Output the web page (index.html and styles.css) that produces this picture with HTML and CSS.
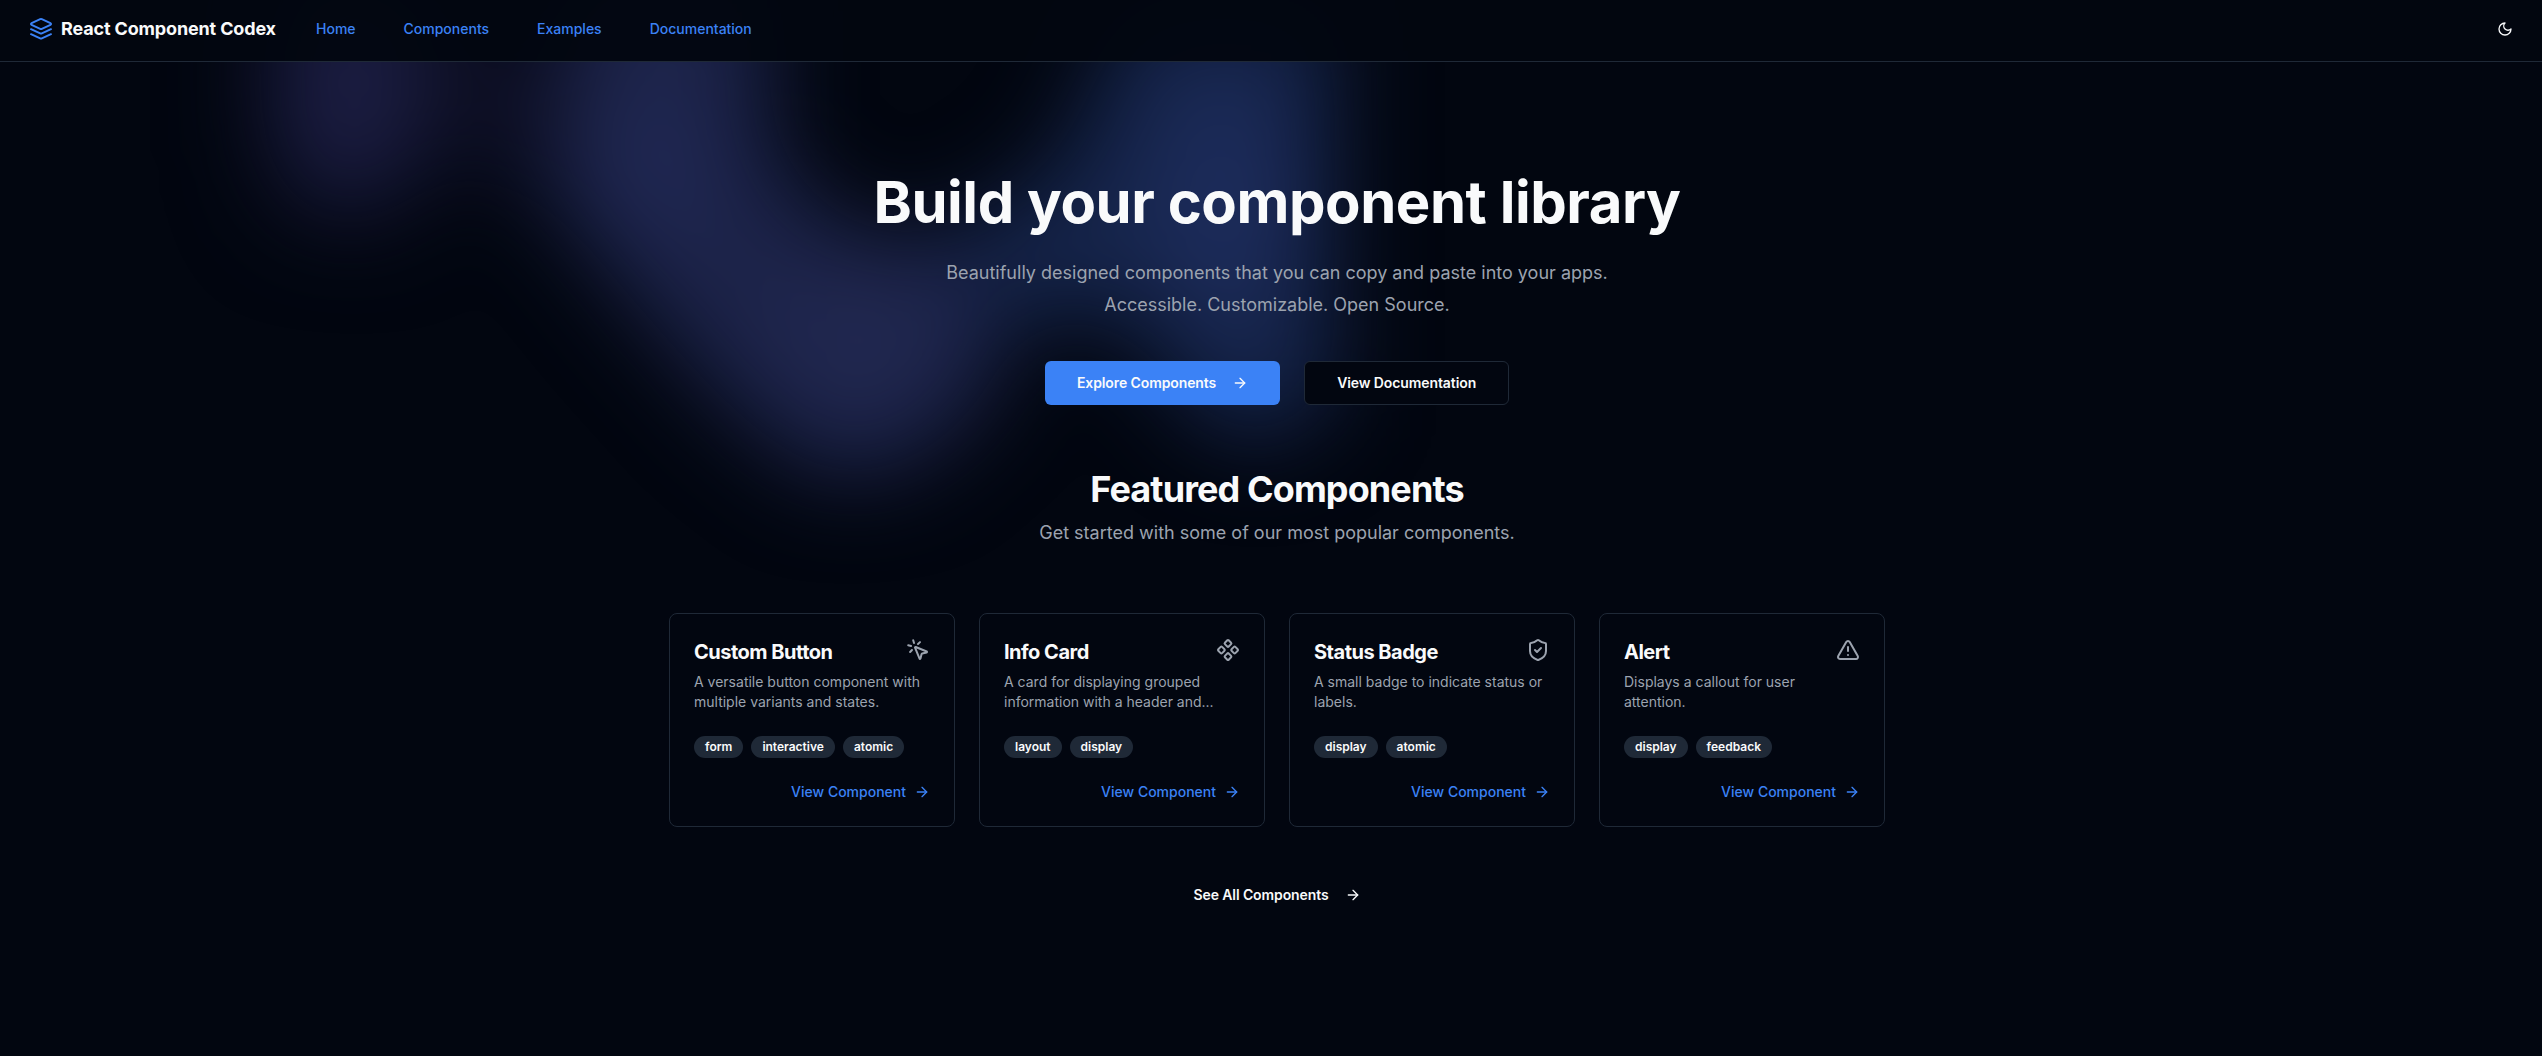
FILE: index.html
```html
<!DOCTYPE html>
<html lang="en">
<head>
<meta charset="utf-8">
<title>React Component Codex</title>
<link rel="stylesheet" href="styles.css">
</head>
<body>
<svg width="0" height="0" class="sprite" aria-hidden="true">
  <symbol id="arrow" viewBox="0 0 24 24"><path d="M5 12h14"/><path d="m12 5 7 7-7 7"/></symbol>
</svg>
<svg class="aurora" viewBox="0 0 2542 1056" aria-hidden="true">
  <defs>
    <filter id="soft" x="-50%" y="-50%" width="200%" height="200%" color-interpolation-filters="sRGB"><feGaussianBlur stdDeviation="46"/></filter>
  </defs>
  <g filter="url(#soft)">
    <path d="M260 -60H430L600 100V220L440 160L390 230L290 220L260 150Z" fill="#0c0e22"/>
    <ellipse cx="350" cy="85" rx="75" ry="115" fill="#1b1d42"/>
    <path d="M570 -40H770V150L850 235L1000 235V390L910 470L820 480L730 410L640 310L550 200Z" fill="#1c2349"/>
    <ellipse cx="655" cy="165" rx="60" ry="80" fill="#1f2752"/>
    <ellipse cx="860" cy="330" rx="85" ry="90" fill="#20274f"/>
    <path d="M1130 0H1335V400L1260 450L1190 410L1130 320L960 320V230L1060 160Z" fill="#15244a"/>
    <ellipse cx="1225" cy="200" rx="75" ry="120" fill="#1c2b5a"/>
  </g>
</svg>
<header class="topbar">
  <a class="brand">
    <svg class="icon brand-icon" viewBox="0 0 24 24"><path d="m12.83 2.18a2 2 0 0 0-1.66 0L2.6 6.08a1 1 0 0 0 0 1.83l8.58 3.91a2 2 0 0 0 1.66 0l8.58-3.9a1 1 0 0 0 0-1.83Z"/><path d="m22 12.18-9.17 4.16a2 2 0 0 1-1.66 0L2 12.18"/><path d="m22 17.18-9.17 4.16a2 2 0 0 1-1.66 0L2 17.18"/></svg>
    <span class="brand-name">React Component Codex</span>
  </a>
  <nav class="nav"><a>Home</a><a>Components</a><a>Examples</a><a>Documentation</a></nav>
  <button class="theme" aria-label="Toggle theme"><svg class="icon icon-sm" viewBox="0 0 24 24"><path d="M12 3a6 6 0 0 0 9 9 9 9 0 1 1-9-9Z"/></svg></button>
</header>
<main class="main">
  <section class="hero">
    <h1>Build your component library</h1>
    <p class="lead">Beautifully designed components that you can copy and paste into your apps.<br>Accessible. Customizable. Open Source.</p>
    <div class="actions">
      <a class="btn btn-primary">Explore Components<svg class="icon icon-sm"><use href="#arrow"/></svg></a>
      <a class="btn btn-outline">View Documentation</a>
    </div>
  </section>
  <section class="featured">
    <h2>Featured Components</h2>
    <p class="sub">Get started with some of our most popular components.</p>
    <div class="cards">
      <article class="card">
        <div class="card-head"><h3>Custom Button</h3><svg class="icon" viewBox="0 0 24 24"><path d="M14 4.1 12 6"/><path d="m5.1 8-2.9-.8"/><path d="m6 12-1.9 2"/><path d="M7.2 2.2 8 5.1"/><path d="M9.037 9.69a.498.498 0 0 1 .653-.653l11 4.5a.5.5 0 0 1-.074.949l-4.349 1.041a1 1 0 0 0-.74.739l-1.04 4.35a.5.5 0 0 1-.95.074z"/></svg></div>
        <p class="desc">A versatile button component with multiple variants and states.</p>
        <div class="tags"><span>form</span><span>interactive</span><span>atomic</span></div>
        <a class="more">View Component<svg class="icon icon-sm"><use href="#arrow"/></svg></a>
      </article>
      <article class="card">
        <div class="card-head"><h3>Info Card</h3><svg class="icon" viewBox="0 0 24 24"><path d="M15.536 11.293a1 1 0 0 0 0 1.414l2.376 2.377a1 1 0 0 0 1.414 0l2.377-2.377a1 1 0 0 0 0-1.414l-2.377-2.377a1 1 0 0 0-1.414 0z"/><path d="M2.297 11.293a1 1 0 0 0 0 1.414l2.377 2.377a1 1 0 0 0 1.414 0l2.377-2.377a1 1 0 0 0 0-1.414L6.088 8.916a1 1 0 0 0-1.414 0z"/><path d="M8.916 17.912a1 1 0 0 0 0 1.415l2.377 2.376a1 1 0 0 0 1.414 0l2.377-2.376a1 1 0 0 0 0-1.415l-2.377-2.376a1 1 0 0 0-1.414 0z"/><path d="M8.916 4.674a1 1 0 0 0 0 1.414l2.377 2.376a1 1 0 0 0 1.414 0l2.377-2.376a1 1 0 0 0 0-1.414l-2.377-2.377a1 1 0 0 0-1.414 0z"/></svg></div>
        <p class="desc">A card for displaying grouped information with a header and...</p>
        <div class="tags"><span>layout</span><span>display</span></div>
        <a class="more">View Component<svg class="icon icon-sm"><use href="#arrow"/></svg></a>
      </article>
      <article class="card">
        <div class="card-head"><h3>Status Badge</h3><svg class="icon" viewBox="0 0 24 24"><path d="M20 13c0 5-3.5 7.5-7.66 8.95a1 1 0 0 1-.67-.01C7.5 20.5 4 18 4 13V6a1 1 0 0 1 1-1c2 0 4.5-1.2 6.24-2.72a1.17 1.17 0 0 1 1.52 0C14.51 3.81 17 5 19 5a1 1 0 0 1 1 1z"/><path d="m9 12 2 2 4-4"/></svg></div>
        <p class="desc">A small badge to indicate status or labels.</p>
        <div class="tags"><span>display</span><span>atomic</span></div>
        <a class="more">View Component<svg class="icon icon-sm"><use href="#arrow"/></svg></a>
      </article>
      <article class="card">
        <div class="card-head"><h3>Alert</h3><svg class="icon" viewBox="0 0 24 24"><path d="m21.73 18-8-14a2 2 0 0 0-3.48 0l-8 14A2 2 0 0 0 4 21h16a2 2 0 0 0 1.73-3"/><path d="M12 9v4"/><path d="M12 17h.01"/></svg></div>
        <p class="desc">Displays a callout for user<br>attention.</p>
        <div class="tags"><span>display</span><span>feedback</span></div>
        <a class="more">View Component<svg class="icon icon-sm"><use href="#arrow"/></svg></a>
      </article>
    </div>
    <a class="all">See All Components<svg class="icon icon-sm"><use href="#arrow"/></svg></a>
  </section>
</main>
</body>
</html>
```
FILE: styles.css
```css
* { box-sizing: border-box; }
body { margin: 0; min-height: 1056px; overflow: hidden; background: #020610; color: #f9fafb; font: 14px/20px Inter, sans-serif; }
h1, h2, h3, p { margin: 0; }
.sprite { position: absolute; }
.aurora { position: absolute; inset: 0; width: 2542px; height: 1056px; z-index: -1; }
.icon { width: 24px; height: 24px; flex: none; fill: none; stroke: currentColor; stroke-width: 2; stroke-linecap: round; stroke-linejoin: round; }
.icon-sm { width: 16px; height: 16px; }

.topbar { display: flex; align-items: center; height: 62px; padding: 0 29px 3px; border-bottom: 1px solid #1f2937; background: rgba(2, 6, 16, .95); }
.brand { display: flex; align-items: center; gap: 8px; width: 287px; }
.brand-icon { color: #3b82f6; }
.brand-name { font-size: 18px; font-weight: 700; letter-spacing: -.15px; white-space: nowrap; }
.nav { display: flex; gap: 48px; color: #3b82f6; font-weight: 500; }
.theme { display: flex; margin-left: auto; padding: 0; border: 0; background: none; color: #f9fafb; }

.main { display: flex; flex-direction: column; align-items: center; padding-left: 12px; text-align: center; }
.hero { display: flex; flex-direction: column; align-items: center; padding-top: 110px; }
h1 { font-size: 58px; line-height: 60px; font-weight: 700; letter-spacing: -.45px; }
.lead { margin-top: 25px; font-size: 18px; line-height: 32px; color: #9ca3af; }
.actions { display: flex; gap: 24px; margin-top: 40px; }
.btn { display: flex; align-items: center; gap: 16px; height: 44px; padding: 0 32px; border-radius: 6px; font-weight: 600; letter-spacing: -.1px; }
.btn-primary { background: #3b82f6; }
.btn-outline { border: 1px solid #1f2937; background: #020610; }

.featured { display: flex; flex-direction: column; align-items: center; padding-top: 64px; }
h2 { font-size: 36px; line-height: 40px; font-weight: 700; letter-spacing: -.9px; }
.sub { margin-top: 10px; font-size: 18px; line-height: 28px; color: #9ca3af; }
.cards { display: grid; grid-template-columns: repeat(4, 286px); gap: 24px; margin-top: 66px; text-align: left; }
.card { display: flex; flex-direction: column; height: 214px; padding: 24px; border: 1px solid #1f2937; border-radius: 8px; background: #020610; }
.card-head { display: flex; justify-content: space-between; height: 34px; color: #9ca3af; }
h3 { padding-top: 2px; font-size: 20px; line-height: 25px; font-weight: 700; color: #f9fafb; letter-spacing: -.5px; }
.desc { height: 40px; color: #9ca3af; }
.tags { display: flex; gap: 8px; margin-top: 24px; }
.tags span { height: 22px; padding: 0 11px; border-radius: 11px; background: #1f2937; font-size: 12px; line-height: 22px; font-weight: 600; }
.more { display: flex; align-items: center; justify-content: flex-end; gap: 8px; margin-top: 24px; color: #3b82f6; font-weight: 500; }
.all { display: flex; align-items: center; gap: 16px; margin-top: 58px; font-weight: 600; letter-spacing: -.1px; }
```
